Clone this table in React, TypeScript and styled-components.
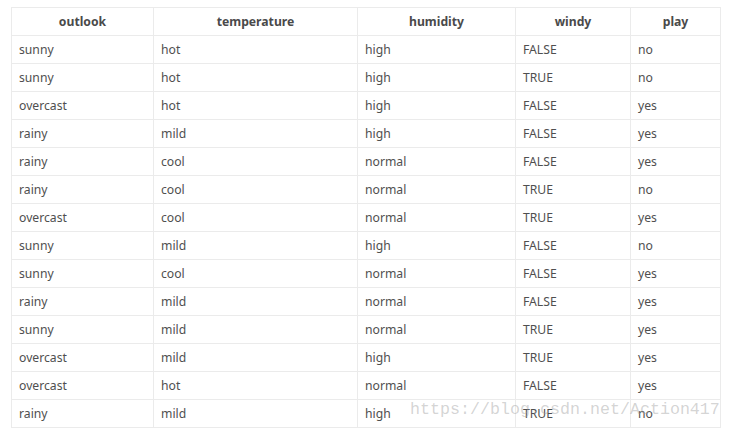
import React from "react";
import styled, { createGlobalStyle } from "styled-components";

const Global = createGlobalStyle`
  html, body { margin: 0; padding: 0; background: #fff; }
  body { font-family: "Noto Sans", "Open Sans", sans-serif; }
`;

const Page = styled.div`
  position: relative;
  padding: 7px 0 0 11px;
  width: 732px;
  height: 432px;
  box-sizing: border-box;
`;

const Table = styled.table`
  border-collapse: collapse;
  table-layout: fixed;
  width: 709px;
  font-size: 12.2px;
  color: #4f4f4f;
`;

const Th = styled.th`
  height: 27px;
  border: 1px solid #ebebeb;
  font-weight: 700;
  text-align: center;
  padding: 0 7px;
  color: #4a4a4a;
`;

const Td = styled.td`
  height: 27px;
  border: 1px solid #ebebeb;
  padding: 0 7px;
  text-align: left;
  vertical-align: middle;
  white-space: nowrap;
`;

const Watermark = styled.div`
  position: absolute;
  left: 410px;
  top: 398px;
  font-family: "Liberation Mono", monospace;
  font-size: 16.67px;
  line-height: 24px;
  color: rgba(160, 160, 160, 0.45);
  pointer-events: none;
  white-space: nowrap;
`;

const widths = [142, 204, 158, 115, 90];
const headers = ["outlook", "temperature", "humidity", "windy", "play"];
const rows: string[][] = [
  ["sunny", "hot", "high", "FALSE", "no"],
  ["sunny", "hot", "high", "TRUE", "no"],
  ["overcast", "hot", "high", "FALSE", "yes"],
  ["rainy", "mild", "high", "FALSE", "yes"],
  ["rainy", "cool", "normal", "FALSE", "yes"],
  ["rainy", "cool", "normal", "TRUE", "no"],
  ["overcast", "cool", "normal", "TRUE", "yes"],
  ["sunny", "mild", "high", "FALSE", "no"],
  ["sunny", "cool", "normal", "FALSE", "yes"],
  ["rainy", "mild", "normal", "FALSE", "yes"],
  ["sunny", "mild", "normal", "TRUE", "yes"],
  ["overcast", "mild", "high", "TRUE", "yes"],
  ["overcast", "hot", "normal", "FALSE", "yes"],
  ["rainy", "mild", "high", "TRUE", "no"],
];

export default function App() {
  return (
    <Page>
      <Global />
      <Table>
        <colgroup>
          {widths.map((w, i) => (
            <col key={i} style={{ width: w }} />
          ))}
        </colgroup>
        <thead>
          <tr>
            {headers.map((h) => (
              <Th key={h}>{h}</Th>
            ))}
          </tr>
        </thead>
        <tbody>
          {rows.map((r, i) => (
            <tr key={i}>
              {r.map((c, j) => (
                <Td key={j}>{c}</Td>
              ))}
            </tr>
          ))}
        </tbody>
      </Table>
      <Watermark>https://blog.csdn.net/Action417</Watermark>
    </Page>
  );
}
